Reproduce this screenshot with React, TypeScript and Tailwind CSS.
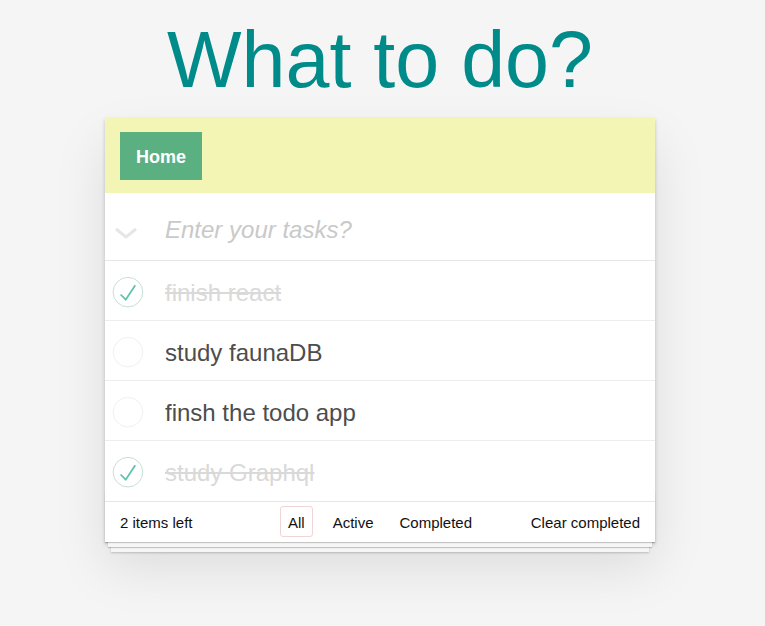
import { useState } from 'react';

type Todo = { id: number; title: string; done: boolean };

const INITIAL: Todo[] = [
  { id: 1, title: 'finish react', done: true },
  { id: 2, title: 'study faunaDB', done: false },
  { id: 3, title: 'finsh the todo app', done: false },
  { id: 4, title: 'study Graphql', done: true },
];

function Toggle({ done }: { done: boolean }) {
  return (
    <svg width="40" height="40" viewBox="-10 -18 100 135" className="absolute left-0 top-[11px]">
      <circle cx="50" cy="50" r="50" fill="none" stroke={done ? '#bddad5' : '#ededed'} strokeWidth="3" />
      {done && <path fill="#5dc2af" d="M72 25L42 71 27 56l-4 4 20 20 34-52z" />}
    </svg>
  );
}

function TodoRow({ todo, last }: { todo: Todo; last: boolean }) {
  return (
    <li className={`relative h-[60px] pl-[60px] pr-[15px] pt-[18px] ${last ? '' : 'border-b border-[#ededed]'}`}>
      <Toggle done={todo.done} />
      <span
        className={`block text-[24px] leading-[1.2] ${todo.done ? 'text-[#d9d9d9] line-through' : 'text-[#4d4d4d]'}`}
      >
        {todo.title}
      </span>
    </li>
  );
}

export default function App() {
  const [todos] = useState(INITIAL);
  const left = todos.filter((t) => !t.done).length;

  return (
    <div className="min-h-screen w-full bg-[#f5f5f5] font-['Liberation_Sans',Arial,sans-serif]">
      <div className="w-[760px] pt-[20px]">
        <h1 className="text-center text-[79px] font-normal leading-[80px] text-[#008b8b]">What to do?</h1>

        <section className="relative mx-auto mt-[18px] w-[550px] bg-white shadow-[0_2px_4px_0_rgba(0,0,0,0.2),0_25px_50px_0_rgba(0,0,0,0.1)]">
          <header className="h-[75px] bg-[#f3f5b5] px-[15px] pt-[14px]">
            <button className="h-[48px] bg-[#5bb082] px-4 pt-[1px] text-[18px] font-bold leading-6 text-white">Home</button>
          </header>

          <div className="relative h-[68px] border-b border-[#e6e6e6] pl-[60px] pr-4 pt-[20px]">
            <svg width="24" height="12" viewBox="0 0 24 12" className="absolute left-[9px] top-[34px]">
              <polyline points="2,2 12,10 22,2" fill="none" stroke="#e6e6e6" strokeWidth="3" strokeLinejoin="round" />
            </svg>
            <input
              className="block w-full bg-transparent text-[24px] italic leading-[1.4] text-[#4d4d4d] outline-none placeholder:text-[#c9c9c9]"
              placeholder="Enter your tasks?"
            />
          </div>

          <ul>
            {todos.map((t, i) => (
              <TodoRow key={t.id} todo={t} last={i === todos.length - 1} />
            ))}
          </ul>

          <footer className="relative flex h-[41px] items-center justify-between border-t border-[#e6e6e6] px-[15px] pt-[2px] text-[15px] text-[#111]">
            <div className="pointer-events-none absolute inset-x-0 bottom-0 h-[50px] overflow-hidden shadow-[0_1px_1px_rgba(0,0,0,0.2),0_8px_0_-3px_#f6f6f6,0_9px_1px_-3px_rgba(0,0,0,0.2),0_16px_0_-6px_#f6f6f6,0_17px_2px_-6px_rgba(0,0,0,0.2)]" />
            <span className="relative leading-5">{left} items left</span>
            <ul className="absolute inset-x-0 top-[4px] flex justify-center gap-[10px]">
              <li className="mr-[2px]">
                <a className="block rounded-[3px] border border-[rgba(175,47,47,0.2)] px-[7px] pb-[4px] pt-[6px] leading-[19px]">All</a>
              </li>
              <li>
                <a className="block rounded-[3px] border border-transparent px-[7px] pb-[4px] pt-[6px] leading-[19px]">Active</a>
              </li>
              <li>
                <a className="block rounded-[3px] border border-transparent px-[7px] pb-[4px] pt-[6px] leading-[19px]">Completed</a>
              </li>
            </ul>
            <button className="relative leading-5">Clear completed</button>
          </footer>
        </section>
      </div>
    </div>
  );
}
